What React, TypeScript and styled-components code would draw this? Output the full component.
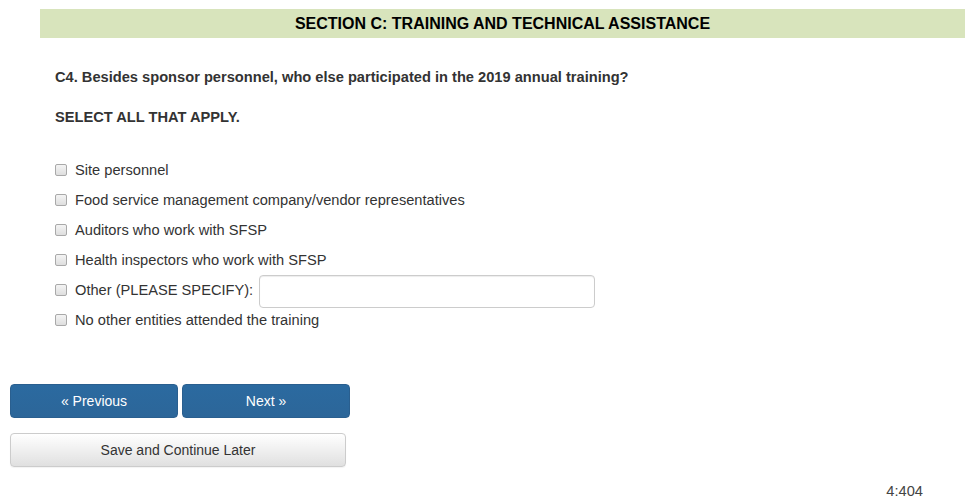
import React from 'react';
import styled, {createGlobalStyle} from 'styled-components';

const TEXT = '#333333';
const BAND = '#d8e4bc';
const BLUE_TOP = '#2b6aa0';
const BLUE_BOTTOM = '#2c6699';
const FONT = '"Liberation Sans", Arial, sans-serif';

const GlobalStyle = createGlobalStyle`
	body {
		margin: 0;
		background: #ffffff;
		font-family: ${FONT};
		font-size: 14.65px;
		line-height: 20px;
		color: ${TEXT};
	}
`;

const Page = styled.div`
	width: 977px;
	height: 503px;
	position: relative;
	overflow: hidden;
`;

const SectionBand = styled.h2`
	margin: 9px 0 0 40px;
	width: 925px;
	height: 29px;
	background: ${BAND};
	font-size: 16px;
	line-height: 29px;
	font-weight: bold;
	text-align: center;
	color: #000;
`;

const Question = styled.div`
	padding: 29px 0 0 55px;
`;

const Prompt = styled.p<{gap: number}>`
	margin: 0 0 ${(p) => p.gap}px 0;
	font-weight: bold;
	line-height: 20px;
`;

const Options = styled.div`
	display: flex;
	flex-direction: column;
`;

const OptionRow = styled.label<{tall?: boolean}>`
	display: flex;
	align-items: center;
	height: ${(p) => (p.tall ? 32 : 30)}px;
	margin-top: ${(p) => (p.tall ? -1 : 0)}px;
	margin-bottom: ${(p) => (p.tall ? -1 : 0)}px;
`;

const Check = styled.input`
	appearance: none;
	width: 12px;
	height: 12px;
	margin: 0 8px 0 0;
	border: 1px solid #a9a9a9;
	border-radius: 2px;
	background: linear-gradient(#f4f4f4, #dedede);
	box-sizing: border-box;
`;

const SpecifyInput = styled.input`
	margin: 2px 0 0 6px;
	width: 336px;
	height: 33px;
	box-sizing: border-box;
	border: 1px solid #cccccc;
	border-radius: 4px;
	box-shadow: inset 0 1px 1px rgba(0, 0, 0, 0.075);
	font: inherit;
	padding: 6px 12px;
`;

const Actions = styled.div`
	display: flex;
	flex-direction: column;
	gap: 15px;
	padding: 49px 0 0 10px;
`;

const NavRow = styled.div`
	display: flex;
	gap: 4px;
`;

const Button = styled.button<{primary?: boolean; w: number}>`
	width: ${(p) => p.w}px;
	height: 34px;
	border-radius: 4px;
	font-family: ${FONT};
	font-size: 14px;
	cursor: pointer;
	color: ${(p) => (p.primary ? '#ffffff' : TEXT)};
	border: 1px solid ${(p) => (p.primary ? '#2a5f8f' : '#cccccc')};
	background: ${(p) =>
		p.primary
			? `linear-gradient(${BLUE_TOP}, ${BLUE_BOTTOM})`
			: 'linear-gradient(#ffffff, #e0e0e0)'};
	box-shadow: ${(p) => (p.primary ? 'none' : '0 1px 1px rgba(0,0,0,0.05)')};
`;

const Footer = styled.div`
	position: absolute;
	right: 54px;
	top: 481px;
	color: #444;
`;

const options = [
	'Site personnel',
	'Food service management company/vendor representatives',
	'Auditors who work with SFSP',
	'Health inspectors who work with SFSP',
	'Other (PLEASE SPECIFY):',
	'No other entities attended the training',
];

export default function App() {
	return (
		<Page>
			<GlobalStyle />
			<SectionBand>SECTION C: TRAINING AND TECHNICAL ASSISTANCE</SectionBand>
			<Question>
				<Prompt gap={20}>
					C4. Besides sponsor personnel, who else participated in the 2019 annual training?
				</Prompt>
				<Prompt gap={28}>SELECT ALL THAT APPLY.</Prompt>
				<Options>
					{options.map((o, i) => {
						const other = o.startsWith('Other');
						return (
							<OptionRow key={i} tall={other}>
								<Check type="checkbox" />
								{o}
								{other && <SpecifyInput type="text" />}
							</OptionRow>
						);
					})}
				</Options>
			</Question>
			<Actions>
				<NavRow>
					<Button primary w={168}>« Previous</Button>
					<Button primary w={168}>Next »</Button>
				</NavRow>
				<Button w={336}>Save and Continue Later</Button>
			</Actions>
			<Footer>4:404</Footer>
		</Page>
	);
}
